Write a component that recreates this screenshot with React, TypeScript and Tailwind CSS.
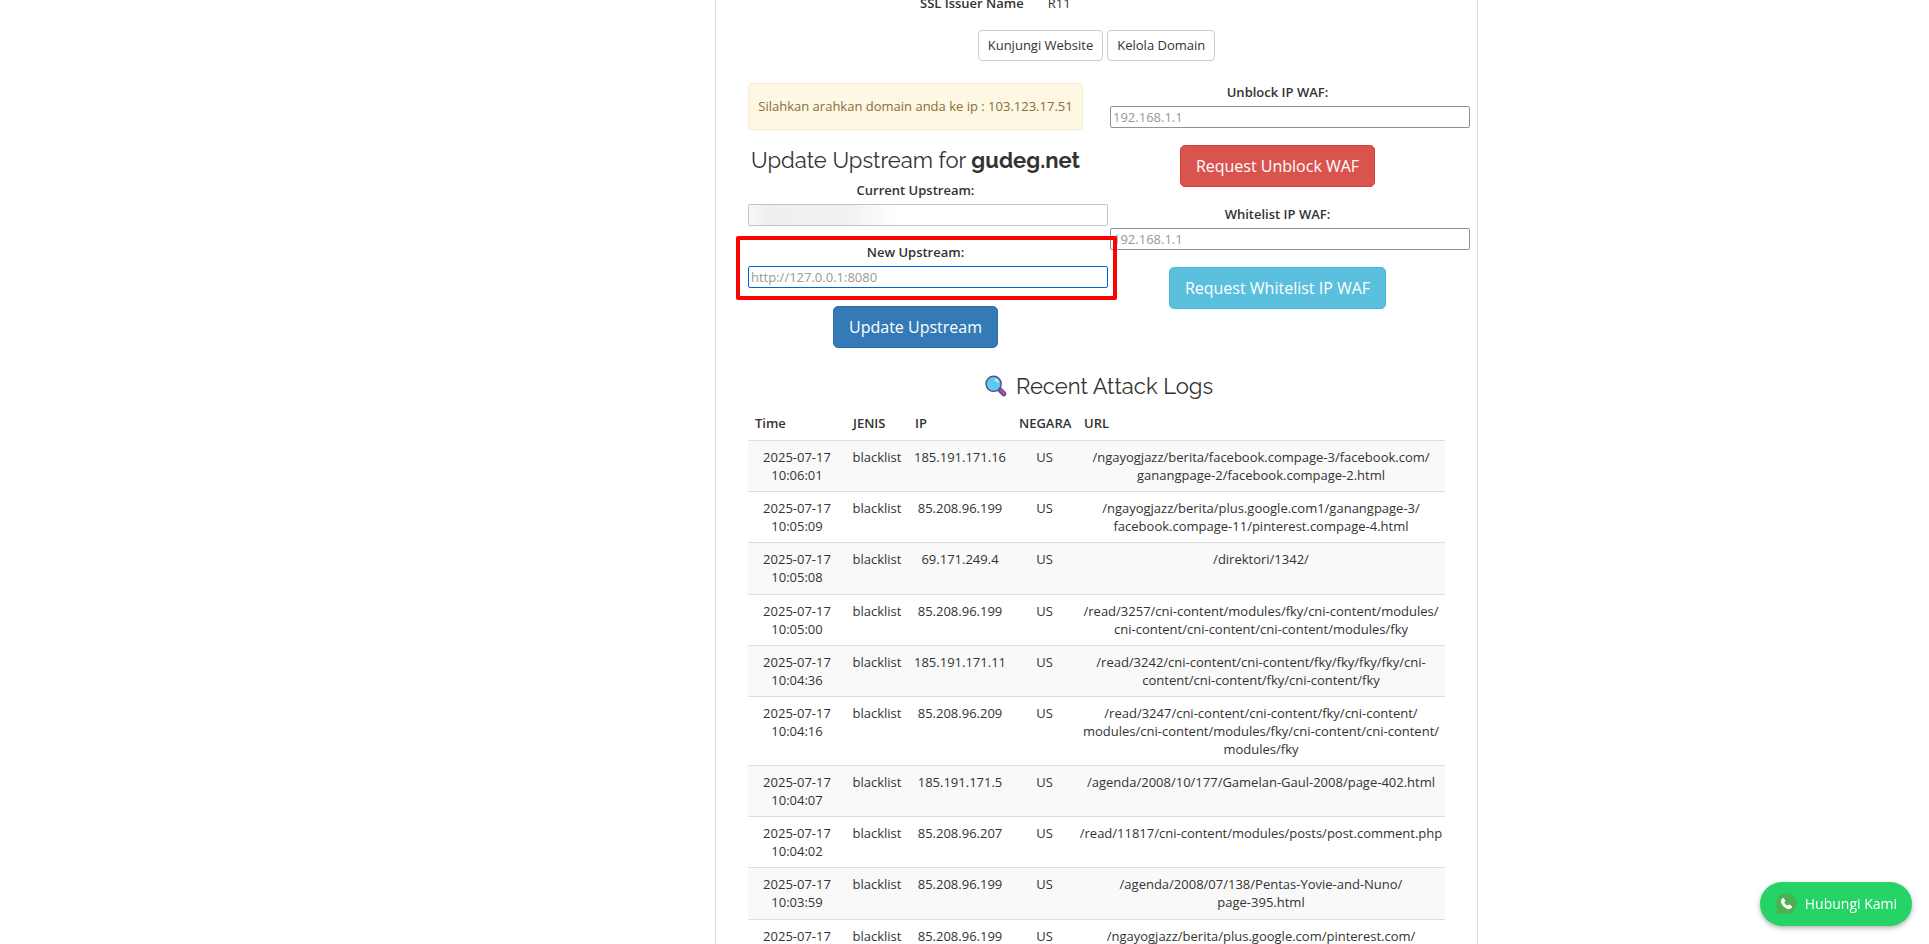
import type { InputHTMLAttributes, ReactNode } from "react";
import clsx from "clsx";

type AttackLog = {
  time: string;
  ip: string;
  country: string;
  url: string[];
};

const logs: AttackLog[] = [
  {
    time: "10:06:01",
    ip: "185.191.171.16",
    country: "US",
    url: ["/ngayogjazz/berita/facebook.compage-3/facebook.com/", "ganangpage-2/facebook.compage-2.html"],
  },
  {
    time: "10:05:09",
    ip: "85.208.96.199",
    country: "US",
    url: ["/ngayogjazz/berita/plus.google.com1/ganangpage-3/", "facebook.compage-11/pinterest.compage-4.html"],
  },
  { time: "10:05:08", ip: "69.171.249.4", country: "US", url: ["/direktori/1342/"] },
  {
    time: "10:05:00",
    ip: "85.208.96.199",
    country: "US",
    url: ["/read/3257/cni-content/modules/fky/cni-content/modules/", "cni-content/cni-content/cni-content/modules/fky"],
  },
  {
    time: "10:04:36",
    ip: "185.191.171.11",
    country: "US",
    url: ["/read/3242/cni-content/cni-content/fky/fky/fky/fky/cni-", "content/cni-content/fky/cni-content/fky"],
  },
  {
    time: "10:04:16",
    ip: "85.208.96.209",
    country: "US",
    url: [
      "/read/3247/cni-content/cni-content/fky/cni-content/",
      "modules/cni-content/modules/fky/cni-content/cni-content/",
      "modules/fky",
    ],
  },
  { time: "10:04:07", ip: "185.191.171.5", country: "US", url: ["/agenda/2008/10/177/Gamelan-Gaul-2008/page-402.html"] },
  { time: "10:04:02", ip: "85.208.96.207", country: "US", url: ["/read/11817/cni-content/modules/posts/post.comment.php"] },
  {
    time: "10:03:59",
    ip: "85.208.96.199",
    country: "US",
    url: ["/agenda/2008/07/138/Pentas-Yovie-and-Nuno/", "page-395.html"],
  },
  {
    time: "10:03:58",
    ip: "85.208.96.199",
    country: "US",
    url: ["/ngayogjazz/berita/plus.google.com/pinterest.com/", "facebook.compage-2.html"],
  },
];

const buttonTone = {
  primary: "bg-[#337ab7] border-[#2e6da4]",
  danger: "bg-[#d9534f] border-[#d43f3a]",
  info: "bg-[#5bc0de] border-[#46b8da]",
};

function ActionButton({ tone, children }: { tone: keyof typeof buttonTone; children: ReactNode }) {
  return (
    <button type="submit" className={clsx("h-[42px] rounded-[5px] border px-[15px] text-base text-white", buttonTone[tone])}>
      {children}
    </button>
  );
}

type FieldProps = InputHTMLAttributes<HTMLInputElement> & { label: string; id: string };

function Field({ label, id, className, ...rest }: FieldProps) {
  return (
    <div className="flex w-full flex-col gap-[5px]">
      <label htmlFor={id} className="text-center font-semibold">
        {label}
      </label>
      <input
        id={id}
        className={clsx(
          "h-[22px] w-[360px] rounded-[2px] border px-[2px] pb-px outline-none placeholder:text-[#999]",
          className ?? "border-[#8f8f9d] bg-white",
        )}
        {...rest}
      />
    </div>
  );
}

function MagnifierIcon() {
  return (
    <svg viewBox="0 0 22 22" className="size-[22px]" aria-hidden="true">
      <path d="M13.6 13.6 18.8 18.8" stroke="#6d3f86" strokeWidth="5" strokeLinecap="round" />
      <path d="M15.6 15.2 19 18.6" stroke="#9a5ca6" strokeWidth="2.6" strokeLinecap="round" />
      <circle cx="8.6" cy="8.8" r="7.6" fill="#5ccbee" stroke="#5b4a8c" strokeWidth="1.4" />
      <path d="M10.6 4.6a4.4 4.4 0 0 1 2 2" stroke="#c9f0fb" strokeWidth="1.8" strokeLinecap="round" fill="none" />
    </svg>
  );
}

function WhatsAppIcon() {
  return (
    <svg viewBox="0 0 22 22" className="size-[22px]" aria-hidden="true">
      <path d="M11.2.4a10.3 10.3 0 1 1-5 19.3L1 21l1.6-4.8A10.3 10.3 0 0 1 11.2.4Z" fill="#4caf50" />
      <path
        d="M7.300 5.400c.5-.5 1.200-.5 1.600.1l1.200 1.700c.3.5.3 1-.1 1.400l-.8.9c.7 1.400 1.800 2.500 3.200 3.200l.9-.8c.4-.4 1-.4 1.400-.1l1.900 1.300c.5.4.6 1.100.1 1.600-1.100 1.300-2.600 1.800-4.300 1.200-3.200-1.200-5.400-3.500-6.300-6.400-.5-1.600 0-3 1.200-4.100Z"
        fill="#fff"
      />
    </svg>
  );
}

export default function App() {
  return (
    <div className="h-screen overflow-hidden bg-white font-['Open_Sans','Noto_Sans',sans-serif] text-[13px] leading-[18px] text-[#333]">
      <div className="grid min-h-full grid-cols-[715fr_763fr_451fr]">
        <main className="col-start-2 -mt-[6px] border-x border-[#ddd] px-8">
          <dl className="flex gap-6 pl-[172px]">
            <dt className="font-semibold">SSL Issuer Name</dt>
            <dd>R11</dd>
          </dl>

          <div className="mt-[18px] flex justify-center gap-1">
            <a href="#website" className="h-[31px] rounded-[4px] border border-[#ccc] px-[9px] py-[5px]">
              Kunjungi Website
            </a>
            <a href="#domain" className="h-[31px] rounded-[4px] border border-[#ccc] px-[9px] py-[5px]">
              Kelola Domain
            </a>
          </div>

          <div className="mt-[22px] grid grid-cols-2 gap-[27px]">
            <div>
              <p className="rounded-[4px] border border-[#faebcc] bg-[#fcf8e3] pt-[13px] pb-[14px] text-center text-[#8a6d3b]">
                Silahkan arahkan domain anda ke ip : 103.123.17.51
              </p>
              <form className="mt-[18px] flex flex-col items-center">
                <h3 className="mb-[9px] font-[Raleway,Lato,sans-serif] text-[22px] leading-6 whitespace-nowrap">
                  Update Upstream for <strong className="font-bold">gudeg.net</strong>
                </h3>
                <Field
                  id="current-upstream"
                  label="Current Upstream:"
                  disabled
                  className="border-[#c4c4c8] bg-[linear-gradient(to_right,#f7f7f7,#efefef_20px,#f1f1f1_100px,#fff_148px)]"
                />
                <div className="relative mt-[17px] w-full">
                  <Field
                    id="new-upstream"
                    label="New Upstream:"
                    placeholder="http://127.0.0.1:8080"
                    className="border-[#0060df] bg-white"
                  />
                  <div className="pointer-events-none absolute -top-[7px] -right-[34px] -bottom-3 -left-3 z-10 rounded-[2px] border-4 border-[#f00]" />
                </div>
                <div className="mt-[18px]">
                  <ActionButton tone="primary">Update Upstream</ActionButton>
                </div>
              </form>
            </div>

            <div className="flex flex-col gap-[18px]">
              <form className="flex flex-col items-center gap-[17px]">
                <Field id="unblock-ip" label="Unblock IP WAF:" placeholder="192.168.1.1" />
                <ActionButton tone="danger">Request Unblock WAF</ActionButton>
              </form>
              <form className="flex flex-col items-center gap-[17px]">
                <Field id="whitelist-ip" label="Whitelist IP WAF:" placeholder="192.168.1.1" />
                <ActionButton tone="info">Request Whitelist IP WAF</ActionButton>
              </form>
            </div>
          </div>

          <h3 className="mt-[26px] mb-[9px] flex items-center justify-center gap-[9px] pl-[5px] font-[Raleway,Lato,sans-serif] text-[22px] leading-6">
            <MagnifierIcon />
            Recent Attack Logs
          </h3>

          <table className="w-full table-fixed border-separate border-spacing-0">
            <thead>
              <tr className="text-left">
                <th className="w-[98px] px-[7px] pt-[7px] pb-2 font-semibold">Time</th>
                <th className="w-[62px] px-[7px] pt-[7px] pb-2 font-semibold">JENIS</th>
                <th className="w-[104px] px-[7px] pt-[7px] pb-2 font-semibold">IP</th>
                <th className="w-[65px] px-[7px] pt-[7px] pb-2 font-semibold">NEGARA</th>
                <th className="px-[7px] pt-[7px] pb-2 font-semibold">URL</th>
              </tr>
            </thead>
            <tbody className="text-center align-top [&_td]:border-t [&_td]:border-[#ddd] [&_td]:py-[7px]">
              {logs.map((log) => (
                <tr key={log.time} className="odd:bg-[#f9f9f9] nth-[3n]:h-[52px]">
                  <td>
                    2025-07-17
                    <br />
                    {log.time}
                  </td>
                  <td className="whitespace-nowrap">blacklist</td>
                  <td className="whitespace-nowrap">{log.ip}</td>
                  <td>{log.country}</td>
                  <td className="whitespace-nowrap">
                    {log.url.map((part) => (
                      <span key={part} className="block">
                        {part}
                      </span>
                    ))}
                  </td>
                </tr>
              ))}
            </tbody>
          </table>
        </main>
      </div>

      <a
        href="#whatsapp"
        className="fixed right-[17px] bottom-[18px] flex h-11 items-center gap-2 rounded-full bg-[#25d366] px-[15px] text-sm text-white shadow-[0_2px_5px_rgba(0,0,0,0.3)]"
      >
        <WhatsAppIcon />
        Hubungi Kami
      </a>
    </div>
  );
}
